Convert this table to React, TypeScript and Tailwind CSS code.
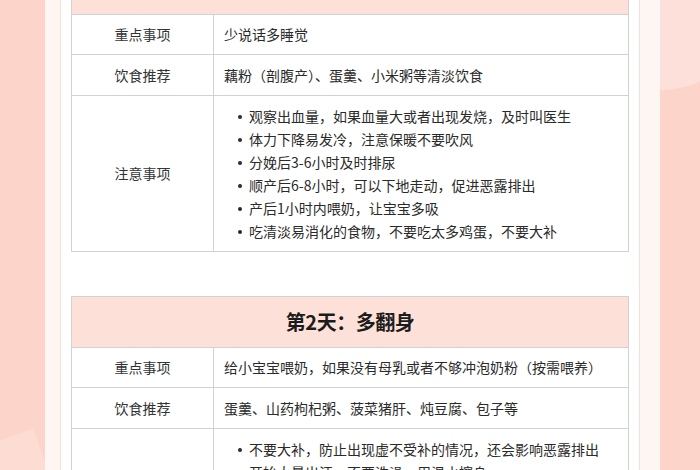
import React from "react"

type Row = { label: string; value?: string; items?: string[] }

interface DayCardProps {
  title: string
  rows: Row[]
  className?: string
}

const DAY_ONE: Row[] = [
  { label: "重点事项", value: "少说话多睡觉" },
  { label: "饮食推荐", value: "藕粉（剖腹产）、蛋羹、小米粥等清淡饮食" },
  {
    label: "注意事项",
    items: [
      "观察出血量，如果血量大或者出现发烧，及时叫医生",
      "体力下降易发冷，注意保暖不要吹风",
      "分娩后3-6小时及时排尿",
      "顺产后6-8小时，可以下地走动，促进恶露排出",
      "产后1小时内喂奶，让宝宝多吸",
      "吃清淡易消化的食物，不要吃太多鸡蛋，不要大补",
    ],
  },
]

const DAY_TWO: Row[] = [
  { label: "重点事项", value: "给小宝宝喂奶，如果没有母乳或者不够冲泡奶粉（按需喂养）" },
  { label: "饮食推荐", value: "蛋羹、山药枸杞粥、菠菜猪肝、炖豆腐、包子等" },
  {
    label: "注意事项",
    items: [
      "不要大补，防止出现虚不受补的情况，还会影响恶露排出",
      "开始大量出汗，不要洗澡，用温水擦身",
      "伤口注意清洁，勤换卫生巾",
      "多翻身，帮助恶露排出",
      "适当下床活动，防止肠粘连",
    ],
  },
]

function DayCard({ title, rows, className = "" }: DayCardProps) {
  return (
    <div className={`shrink-0 border border-[#d2d2d2] ${className}`}>
      {/* Header */}
      <div className="h-[51px] bg-[#fde1d9] border-b border-[#d2d2d2] flex items-center justify-center">
        <h2 className="text-[20px] font-bold text-[#1c1c1c] tracking-[-0.5px]">{title}</h2>
      </div>

      {rows.map((row, i) => (
        <div
          key={row.label}
          className={`grid grid-cols-[142px_1fr] ${i < rows.length - 1 ? "border-b border-[#d2d2d2]" : ""} ${
            i === 0 ? "h-[40px]" : i === 1 ? "h-[41px]" : ""
          }`}
        >
          <div className="border-r border-[#d2d2d2] flex items-center justify-center text-[14px] text-[#333]">
            {row.label}
          </div>
          {row.items ? (
            <ul className="pl-[24px] pr-[8px] pt-[9px] pb-[8px]">
              {row.items.map((item) => (
                <li key={item} className="flex items-center leading-[23px] text-[14px] text-[#2a2a2a]">
                  <span className="w-[4px] h-[4px] rounded-full bg-[#2a2a2a] mr-[7px] shrink-0" />
                  {item}
                </li>
              ))}
            </ul>
          ) : (
            <div className="flex items-center pl-[10px] text-[14px] text-[#2a2a2a]">{row.value}</div>
          )}
        </div>
      ))}
    </div>
  )
}

export default function App() {
  return (
    <div
      className="relative w-[700px] h-[470px] overflow-hidden bg-[#fdd4ca]"
      style={{ fontFamily: '"Noto Sans CJK SC", "Noto Sans", sans-serif' }}
    >
      {/* soft background shapes */}
      <div className="absolute right-[-60px] top-[-120px] w-[200px] h-[210px] rounded-full bg-[#fde0d9]" />
      <div className="absolute left-[-60px] top-[445px] w-[110px] h-[80px] rotate-[-20deg] bg-[#fddcd3]" />

      <div className="relative ml-[45px] w-[615px] h-full bg-[#fef6f3] pl-[15px] pr-[20px]">
        <div className="h-full flex flex-col bg-white border-x border-[#f3dfd9] px-[10px]">
          <DayCard title="第1天：好好休息" rows={DAY_ONE} className="mt-[-37px]" />
          <DayCard title="第2天：多翻身" rows={DAY_TWO} className="mt-[44px]" />
        </div>
      </div>
    </div>
  )
}
